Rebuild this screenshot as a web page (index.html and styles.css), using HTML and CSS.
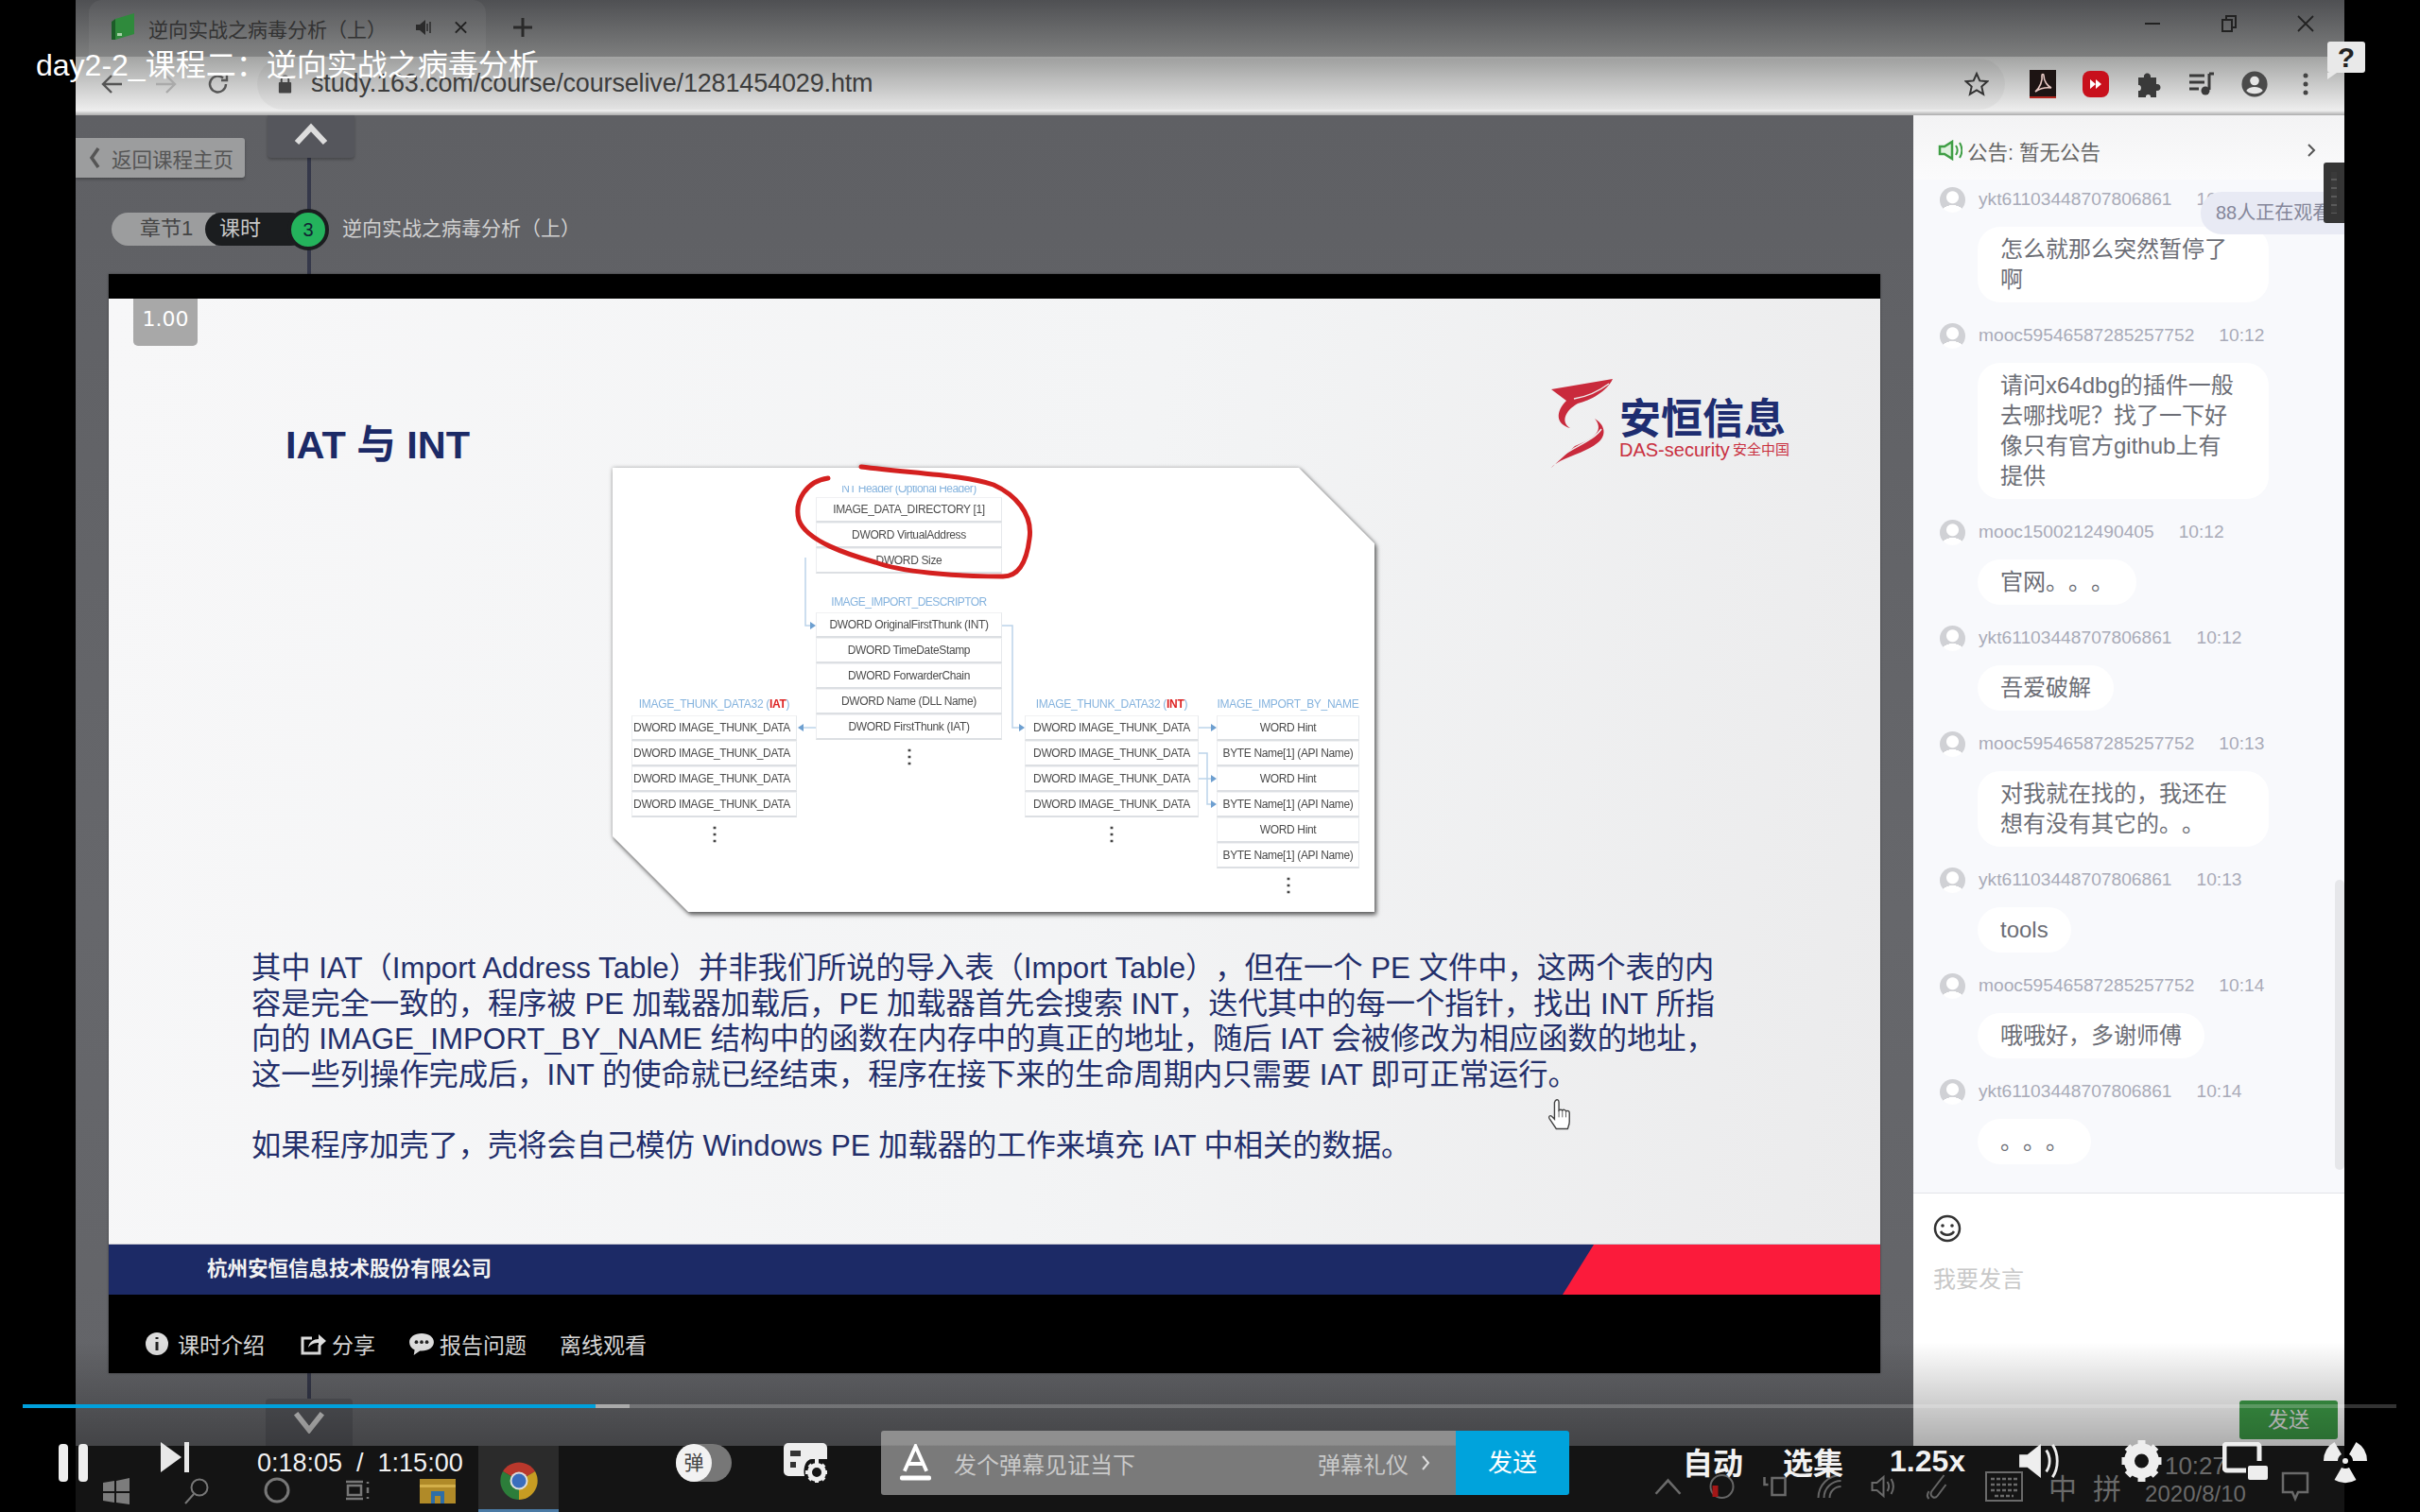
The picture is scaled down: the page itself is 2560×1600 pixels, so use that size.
FILE: index.html
```html
<!DOCTYPE html>
<html>
<head>
<meta charset="utf-8">
<title>逆向实战之病毒分析（上）</title>
<link rel="stylesheet" href="styles.css">
</head>
<body>

<div class="screen">

    <div class="tabstrip">
        <div class="tab">
            <svg class="tab-favicon" viewBox="0 0 24 28"><path d="M4 6L24 0V22L4 28Z" fill="#2f8a3c"/><path d="M0 9L4 6V28H0Z" fill="#1c5c28"/><path d="M6 21h5v3H6z" fill="#a9d2a9"/></svg>
            <span class="tab-title">逆向实战之病毒分析（上）</span>
            <svg class="tab-sound" viewBox="0 0 18 18"><path d="M1 6h4l6-5v16l-6-5H1z" fill="#2b2b2b"/><path d="M13 5v8M16 3v12" stroke="#2b2b2b" stroke-width="1.5"/></svg>
            <svg class="tab-close" viewBox="0 0 16 16"><path d="M2 2l12 12M14 2L2 14" stroke="#222" stroke-width="2.2"/></svg>
        </div>
        <svg class="tab-new" viewBox="0 0 22 22"><path d="M11 1v20M1 11h20" stroke="#2a2a2a" stroke-width="3"/></svg>
        <div class="win-buttons">
            <svg viewBox="0 0 20 20"><path d="M2 10h16" stroke="#222" stroke-width="2"/></svg>
            <svg viewBox="0 0 20 20"><path d="M3 6h10v12H3zM7 6V2h10v12h-4" fill="none" stroke="#222" stroke-width="2"/></svg>
            <svg viewBox="0 0 20 20"><path d="M2 2l16 16M18 2L2 18" stroke="#222" stroke-width="1.8"/></svg>
        </div>
    </div>

    <div class="toolbar">
        <svg class="nav-icon" viewBox="0 0 24 24"><path d="M22 12H3M11 3l-9 9 9 9" fill="none" stroke="#555" stroke-width="2.4"/></svg>
        <svg class="nav-icon" viewBox="0 0 24 24"><path d="M2 12h19M13 3l9 9-9 9" fill="none" stroke="#aaa" stroke-width="2.4"/></svg>
        <svg class="nav-icon" viewBox="0 0 24 24"><path d="M20 12a8.5 8.5 0 1 1-3-6.5M21 2v6h-6" fill="none" stroke="#555" stroke-width="2.4"/></svg>
        <div class="omnibox">
            <svg class="lock" viewBox="0 0 18 22"><path d="M5 9V6a4 4 0 0 1 8 0v3" fill="none" stroke="#444" stroke-width="2"/><rect x="2" y="9" width="14" height="12" rx="1" fill="#444"/></svg>
            <span class="url">study.163.com/course/courselive/1281454029.htm</span>
            <svg class="star" viewBox="0 0 26 26"><path d="M13 2l3.300 7.400 8 .8-6 5.400 1.800 8L13 19.400 5.900 23.600l1.800-8-6-5.400 8-.8z" fill="none" stroke="#333" stroke-width="2"/></svg>
        </div>
        <div class="ext-icons">
            <svg viewBox="0 0 28 30"><rect width="28" height="30" fill="#1d1413"/><rect y="28" width="28" height="2" fill="#b3261e"/><path d="M6 23c5-4 8-12 7-17 0-2 2-2 2 0 0 6 4 11 8 13-6-1-11 0-17 4z" fill="none" stroke="#e8c9c4" stroke-width="1.6"/></svg>
            <svg viewBox="0 0 28 28"><rect width="28" height="28" rx="8" fill="#c8101c"/><path d="M8 9l6 5-6 5zM14 9l6 5-6 5z" fill="#fff"/></svg>
            <svg viewBox="0 0 28 30"><path d="M3 8h6c-1-6 8-6 7 0h6v7c6-1 6 8 0 7v7h-6c1-4-6-4-5 0H3v-7c4 1 4-7 0-6z" fill="#3a3a3a"/></svg>
            <svg viewBox="0 0 28 28"><path d="M1 5h16M1 12h16M1 19h10" stroke="#3a3a3a" stroke-width="3"/><path d="M22 3v17" stroke="#3a3a3a" stroke-width="3"/><circle cx="18" cy="21" r="4.500" fill="#3a3a3a"/><path d="M22 3h5" stroke="#3a3a3a" stroke-width="3"/></svg>
            <svg viewBox="0 0 32 32"><circle cx="16" cy="16" r="15.500" fill="#4a4a4a"/><circle cx="16" cy="12" r="5.500" fill="#e6e6e6"/><path d="M6 24c3-6 17-6 20 0-5 5-15 5-20 0z" fill="#e6e6e6"/></svg>
            <svg class="ext-dots" viewBox="0 0 6 24"><circle cx="3" cy="3" r="2.500" fill="#444"/><circle cx="3" cy="12" r="2.500" fill="#444"/><circle cx="3" cy="21" r="2.500" fill="#444"/></svg>
        </div>
    </div>

    <div class="main">
        <div class="stage">
            <div class="spine"></div>

            <div class="stage-head">
                <div class="back-btn">
                    <svg viewBox="0 0 12 24"><path d="M10 2L3 12l7 10" fill="none" stroke="#555" stroke-width="3.500"/></svg>
                    <span>返回课程主页</span>
                </div>
                <div class="rail-tab rail-tab-up">
                    <svg viewBox="0 0 38 24"><path d="M4 21L19 5l15 16" fill="none" stroke="#ddd" stroke-width="6"/></svg>
                </div>
            </div>

            <div class="lesson-row">
                <span class="pill-chapter">章节1</span>
                <span class="pill-lesson">课时</span>
                <span class="lesson-num">3</span>
                <span class="lesson-name">逆向实战之病毒分析（上）</span>
            </div>

            <div class="player">
                <div class="player-top"></div>
                <div class="slide">
                    <div class="rate-badge">1.00</div>
                    <div class="slide-head">
                        <h1 class="slide-title">IAT 与 INT</h1>
                        <div class="logo">
                            <svg class="logo-mark" viewBox="0 0 66 96">
                                <path d="M1 12L66 1C60 14 42 24 29 27C15 35 11 47 21 53C6 49 5 36 17 24Z" fill="#c92a3c"/>
                                <path d="M25 22C38 20 50 15 62 6" fill="none" stroke="#eee" stroke-width="1.500"/>
                                <path d="M47 43C56 54 50 63 26 72L1 95C10 84 38 80 52 67C60 59 57 49 47 43Z" fill="#c92a3c"/>
                                <path d="M10 84C26 72 46 66 54 54" fill="none" stroke="#eee" stroke-width="1.500"/>
                            </svg>
                            <div class="logo-text">
                                <div class="logo-cn">安恒信息</div>
                                <div class="logo-en"><span>DAS-security</span><span class="logo-tag">安全中国</span></div>
                            </div>
                        </div>
                    </div>

                    <div class="diagram">
                        <div class="diagram-sheet"></div>

                        <div class="tbl tbl-nt">
                            <div class="tbl-title tbl-title-cut">NT Header (Optional Header)</div>
                            <div class="tbl-row">IMAGE_DATA_DIRECTORY [1]</div>
                            <div class="tbl-row">DWORD VirtualAddress</div>
                            <div class="tbl-row">DWORD Size</div>
                        </div>

                        <div class="tbl tbl-desc">
                            <div class="tbl-title">IMAGE_IMPORT_DESCRIPTOR</div>
                            <div class="tbl-row">DWORD OriginalFirstThunk (INT)</div>
                            <div class="tbl-row">DWORD TimeDateStamp</div>
                            <div class="tbl-row">DWORD ForwarderChain</div>
                            <div class="tbl-row">DWORD Name (DLL Name)</div>
                            <div class="tbl-row">DWORD FirstThunk (IAT)</div>
                            <div class="tbl-dots">⋮</div>
                        </div>

                        <div class="tbl tbl-iat">
                            <div class="tbl-title">IMAGE_THUNK_DATA32 (<b>IAT</b>)</div>
                            <div class="tbl-row">DWORD IMAGE_THUNK_DATA</div>
                            <div class="tbl-row">DWORD IMAGE_THUNK_DATA</div>
                            <div class="tbl-row">DWORD IMAGE_THUNK_DATA</div>
                            <div class="tbl-row">DWORD IMAGE_THUNK_DATA</div>
                            <div class="tbl-dots">⋮</div>
                        </div>

                        <div class="tbl tbl-int">
                            <div class="tbl-title">IMAGE_THUNK_DATA32 (<b>INT</b>)</div>
                            <div class="tbl-row">DWORD IMAGE_THUNK_DATA</div>
                            <div class="tbl-row">DWORD IMAGE_THUNK_DATA</div>
                            <div class="tbl-row">DWORD IMAGE_THUNK_DATA</div>
                            <div class="tbl-row">DWORD IMAGE_THUNK_DATA</div>
                            <div class="tbl-dots">⋮</div>
                        </div>

                        <div class="tbl tbl-name">
                            <div class="tbl-title">IMAGE_IMPORT_BY_NAME</div>
                            <div class="tbl-row">WORD Hint</div>
                            <div class="tbl-row">BYTE Name[1] (API Name)</div>
                            <div class="tbl-row">WORD Hint</div>
                            <div class="tbl-row">BYTE Name[1] (API Name)</div>
                            <div class="tbl-row">WORD Hint</div>
                            <div class="tbl-row">BYTE Name[1] (API Name)</div>
                            <div class="tbl-dots">⋮</div>
                        </div>

                        <svg class="diagram-lines" viewBox="0 0 808 470">
                            <g fill="none" stroke="#bcd4ea" stroke-width="1.500">
                                <path d="M204 95V167H212"/>
                                <path d="M412 167H423V275H434"/>
                                <path d="M215 275H200"/>
                                <path d="M620 275H634"/>
                                <path d="M620 302H629V356H634"/>
                                <path d="M620 329H634"/>
                            </g>
                            <g fill="#6d9fd0">
                                <path d="M209 163l6 4-6 4z"/>
                                <path d="M430 271l6 4-6 4z"/>
                                <path d="M202 271l-6 4 6 4z"/>
                                <path d="M633 271l6 4-6 4z"/>
                                <path d="M633 325l6 4-6 4z"/>
                                <path d="M633 352l6 4-6 4z"/>
                            </g>
                            <path class="red-mark" d="M228 11C205 14 192 35 197 55C205 78 250 92 278 100C305 110 360 115 413 115C430 115 438 100 441 75C445 48 425 28 403 18C375 8 320 6 263 -1"/>
                        </svg>
                    </div>

                    <div class="slide-text">
                        <p>其中 IAT（Import Address Table）并非我们所说的导入表（Import Table），但在一个 PE 文件中，这两个表的内<br>容是完全一致的，程序被 PE 加载器加载后，PE 加载器首先会搜索 INT，迭代其中的每一个指针，找出 INT 所指<br>向的 IMAGE_IMPORT_BY_NAME 结构中的函数在内存中的真正的地址，随后 IAT 会被修改为相应函数的地址，<br>这一些列操作完成后，INT 的使命就已经结束，程序在接下来的生命周期内只需要 IAT 即可正常运行。</p>
                        <p>如果程序加壳了，壳将会自己模仿 Windows PE 加载器的工作来填充 IAT 中相关的数据。</p>
                    </div>

                    <svg class="hand" viewBox="0 0 28 38"><path d="M9 2c2-2 4-1 4 2v9c1-1 3-1 4 0 1-1 3-1 4 1 2-1 4 0 4 2v10c0 3-1 5-2 8H10L2 22c-1-2 1-4 3-2l3 3V4z" fill="#fff" stroke="#444" stroke-width="1.500"/><path d="M13 13v8M17 13v8M21 14v7" stroke="#555"/></svg>
                </div>

                <div class="slide-band">
                    <span>杭州安恒信息技术股份有限公司</span>
                    <div class="band-red"></div>
                </div>

                <div class="player-foot">
                    <div class="foot-item">
                        <svg viewBox="0 0 24 24"><circle cx="12" cy="12" r="12" fill="#ddd"/><path d="M12 5v2M12 10v9" stroke="#222" stroke-width="3"/></svg>
                        <span>课时介绍</span>
                    </div>
                    <div class="foot-item">
                        <svg viewBox="0 0 28 24"><path d="M20 13v9H2V6h10" fill="none" stroke="#ddd" stroke-width="3"/><path d="M8 16c1-6 6-9 11-9V2l8 7-8 7v-5c-4 0-8 1-11 5z" fill="#ddd"/></svg>
                        <span class="foot-short">分享</span>
                    </div>
                    <div class="foot-item">
                        <svg viewBox="0 0 30 26"><path d="M15 1c8 0 14 4 14 10s-6 10-14 10h-2l-7 5 1-6C3 18 1 15 1 11 1 5 7 1 15 1z" fill="#ddd"/><circle cx="9" cy="11" r="2" fill="#222"/><circle cx="15" cy="11" r="2" fill="#222"/><circle cx="21" cy="11" r="2" fill="#222"/></svg>
                        <span class="foot-short">报告问题</span>
                    </div>
                    <div class="foot-item foot-last"><span>离线观看</span></div>
                </div>
            </div>

            <div class="rail-tab rail-tab-down">
                <svg viewBox="0 0 38 26"><path d="M4 3l15 19L34 3" fill="none" stroke="#ccc" stroke-width="6"/></svg>
            </div>
        </div>

        <div class="chat">
            <div class="notice">
                <svg class="notice-icon" viewBox="0 0 26 22"><path d="M2 7h5l8-5v18l-8-5H2z" fill="#dff0df" stroke="#3f9e45" stroke-width="2.500"/><path d="M19 6c2 3 2 7 0 10M23 3c3 5 3 11 0 16" fill="none" stroke="#3f9e45" stroke-width="2"/></svg>
                <span>公告: 暂无公告</span>
                <svg class="notice-more" viewBox="0 0 10 16"><path d="M2 2l6 6-6 6" fill="none" stroke="#555" stroke-width="2"/></svg>
            </div>

            <div class="messages">
                <div class="msg">
                    <div class="msg-head"><span class="avatar"></span><span class="msg-name">ykt61103448707806861</span><span class="msg-time">10:12</span></div>
                    <div class="bubble bubble-full">怎么就那么突然暂停了啊</div>
                </div>
                <div class="msg">
                    <div class="msg-head"><span class="avatar"></span><span class="msg-name">mooc59546587285257752</span><span class="msg-time">10:12</span></div>
                    <div class="bubble bubble-full">请问x64dbg的插件一般去哪找呢？找了一下好像只有官方github上有提供</div>
                </div>
                <div class="msg">
                    <div class="msg-head"><span class="avatar"></span><span class="msg-name">mooc1500212490405</span><span class="msg-time">10:12</span></div>
                    <div class="bubble">官网。。。</div>
                </div>
                <div class="msg">
                    <div class="msg-head"><span class="avatar"></span><span class="msg-name">ykt61103448707806861</span><span class="msg-time">10:12</span></div>
                    <div class="bubble">吾爱破解</div>
                </div>
                <div class="msg">
                    <div class="msg-head"><span class="avatar"></span><span class="msg-name">mooc59546587285257752</span><span class="msg-time">10:13</span></div>
                    <div class="bubble bubble-full">对我就在找的，我还在想有没有其它的。。</div>
                </div>
                <div class="msg">
                    <div class="msg-head"><span class="avatar"></span><span class="msg-name">ykt61103448707806861</span><span class="msg-time">10:13</span></div>
                    <div class="bubble">tools</div>
                </div>
                <div class="msg">
                    <div class="msg-head"><span class="avatar"></span><span class="msg-name">mooc59546587285257752</span><span class="msg-time">10:14</span></div>
                    <div class="bubble">哦哦好，多谢师傅</div>
                </div>
                <div class="msg">
                    <div class="msg-head"><span class="avatar"></span><span class="msg-name">ykt61103448707806861</span><span class="msg-time">10:14</span></div>
                    <div class="bubble">。。。</div>
                </div>
                <div class="chat-scroll"></div>
                <div class="viewers">88人正在观看</div>
            </div>
            <div class="side-grip"></div>

            <div class="composer">
                <svg class="smile" viewBox="0 0 30 30"><circle cx="15" cy="15" r="13" fill="none" stroke="#333" stroke-width="2.500"/><circle cx="10" cy="12" r="1.800" fill="#333"/><circle cx="20" cy="12" r="1.800" fill="#333"/><path d="M8 18c3 5 11 5 14 0" fill="none" stroke="#333" stroke-width="2.500"/></svg>
                <div class="composer-hint">我要发言</div>
                <div class="composer-send">发送</div>
            </div>
        </div>
    </div>

    <div class="taskbar">
        <div class="task-cell">
            <svg viewBox="0 0 30 28" class="win-logo"><path d="M1 5l12-2v11H1zM15 3l14-3v14H15zM1 16h12v10L1 24zM15 16h14v12l-14-2z" fill="#7c7c7c"/></svg>
        </div>
        <div class="task-cell">
            <svg viewBox="0 0 30 30" class="task-icon"><circle cx="18" cy="12" r="8.500" fill="none" stroke="#777" stroke-width="2"/><path d="M12 19L3 29" stroke="#777" stroke-width="2"/></svg>
        </div>
        <div class="task-cell">
            <svg viewBox="0 0 30 30" class="task-icon"><circle cx="15" cy="15" r="12" fill="none" stroke="#777" stroke-width="3"/></svg>
        </div>
        <div class="task-cell">
            <svg viewBox="0 0 30 30" class="task-icon"><path d="M3 6h18M3 24h18M5 10h14v10H5zM26 6v2M26 12v6M26 22v2" fill="none" stroke="#777" stroke-width="2.500"/></svg>
        </div>
        <div class="task-cell">
            <svg viewBox="0 0 38 26" class="task-folder"><path d="M0 0h38v26H0z" fill="#b08a28"/><path d="M0 6h38v3H0z" fill="#d4b04a"/><path d="M12 13h14v13h-4v-8h-6v8h-4z" fill="#2e6ea8"/></svg>
        </div>
        <div class="task-cell task-active">
            <svg viewBox="0 0 40 40" class="task-chrome">
                <path d="M20 20L3 10A20 20 0 0 1 37 10Z" fill="#b9382c"/>
                <path d="M20 20L37 10A20 20 0 0 1 20 40Z" fill="#c79c22"/>
                <path d="M20 20L20 40A20 20 0 0 1 3 10Z" fill="#2c7d3a"/>
                <circle cx="20" cy="20" r="9.500" fill="#ddd"/>
                <circle cx="20" cy="20" r="7.500" fill="#3a6dbd"/>
            </svg>
        </div>
        <div class="tray">
            <svg viewBox="0 0 24 14" class="tray-icon"><path d="M2 13L12 2l10 11" fill="none" stroke="#6a6a6a" stroke-width="2"/></svg>
            <svg viewBox="0 0 30 30" class="tray-icon"><circle cx="15" cy="15" r="12" fill="none" stroke="#666" stroke-width="2"/><path d="M5 14h6v12H5z" fill="#a51717"/></svg>
            <svg viewBox="0 0 30 30" class="tray-icon"><path d="M3 5v8h4M11 6h14v18H11z" fill="none" stroke="#6a6a6a" stroke-width="2.500"/></svg>
            <svg viewBox="0 0 30 30" class="tray-icon"><path d="M3 27A24 24 0 0 1 27 3M9 27A18 18 0 0 1 27 9M15 27a12 12 0 0 1 12-12" fill="none" stroke="#666" stroke-width="2"/></svg>
            <svg viewBox="0 0 30 30" class="tray-icon"><path d="M3 11h5l7-6v20l-7-6H3zM19 10c2 3 2 7 0 10M23 7c3 5 3 11 0 16" fill="none" stroke="#6a6a6a" stroke-width="2"/></svg>
            <svg viewBox="0 0 30 30" class="tray-icon"><path d="M22 3L9 20c-3 5 3 9 6 5l9-12M6 20c-2 3-2 6 0 8" fill="none" stroke="#666" stroke-width="2"/></svg>
            <svg viewBox="0 0 40 34" class="tray-key"><rect x="1" y="2" width="38" height="30" fill="none" stroke="#6a6a6a" stroke-width="2"/><path d="M6 9h28M6 15h28M6 21h28M10 27h20" stroke="#6a6a6a" stroke-width="2.500" stroke-dasharray="4 2"/></svg>
            <span class="tray-ime">中</span>
            <span class="tray-ime">拼</span>
            <div class="clock"><span class="clock-time">10:27</span><span>2020/8/10</span></div>
            <svg viewBox="0 0 30 32" class="tray-note"><path d="M2 2h26v20H18l-3 7-3-7H2z" fill="none" stroke="#6a6a6a" stroke-width="2.500"/></svg>
        </div>
    </div>
</div>

<!-- player chrome sitting on top of the recording -->
<div class="overlay">
    <div class="overlay-fade"></div>
    <div class="video-title">day2-2_课程二：逆向实战之病毒分析</div>
    <div class="help-badge">?</div>
    <div class="progress">
        <div class="progress-played"></div>
        <div class="progress-buffer"></div>
    </div>
    <div class="controls">
        <div class="pause"><i></i><i></i></div>
        <svg class="next" viewBox="0 0 30 32"><path d="M0 0l22 16L0 32z" fill="#e8e8e8"/><rect x="25" y="0" width="5" height="32" fill="#e8e8e8"/></svg>
        <div class="timecode">0:18:05&nbsp; /&nbsp; 1:15:00</div>
        <div class="danmu-toggle"><span>弹</span></div>
        <svg class="danmu-set" viewBox="0 0 46 42"><path d="M5 0h36a5 5 0 0 1 5 5v12H30c-6 0-10 8-8 18H5a5 5 0 0 1-5-5V5a5 5 0 0 1 5-5z" fill="#eee"/><rect x="7" y="8" width="11" height="6" fill="#333"/><rect x="7" y="20" width="6" height="6" fill="#333"/><circle cx="35" cy="31" r="7.500" fill="none" stroke="#eee" stroke-width="5"/><path d="M35 17v6M35 39v4M23 31h5M42 31h4M27 23l3 3M40 36l3 3M43 23l-3 3M30 36l-3 3" stroke="#eee" stroke-width="4"/></svg>
        <div class="danmu-input">
            <svg class="danmu-a" viewBox="0 0 34 40"><path d="M5 29L17 2l12 27M9 21h16" fill="none" stroke="#fff" stroke-width="4"/><rect x="0" y="34" width="34" height="5" rx="2" fill="#fff"/></svg>
            <span class="danmu-hint">发个弹幕见证当下</span>
            <span class="danmu-rule">弹幕礼仪</span>
            <svg class="danmu-more" viewBox="0 0 10 18"><path d="M2 2l6 7-6 7" fill="none" stroke="#ddd" stroke-width="2"/></svg>
        </div>
        <div class="danmu-send">发送</div>
        <div class="ctl-right">
            <span class="ctl-text">自动</span>
            <span class="ctl-text ctl-tight">选集</span>
            <span class="ctl-text">1.25x</span>
            <svg class="ctl-icon ctl-sound" viewBox="0 0 44 40"><path d="M0 13h9L24 1v38L9 27H0z" fill="#eee"/><path d="M30 8c5 7 5 17 0 24M37 2c7 10 7 26 0 36" fill="none" stroke="#eee" stroke-width="3"/></svg>
            <svg class="ctl-icon ctl-gear" viewBox="0 0 46 44"><circle cx="23" cy="22" r="13" fill="none" stroke="#eee" stroke-width="11"/><path d="M23 0v9M23 35v9M2 22h9M35 22h9M8 7l7 7M31 30l7 7M38 7l-7 7M15 30l-7 7" stroke="#eee" stroke-width="8"/></svg>
            <svg class="ctl-icon ctl-wide" viewBox="0 0 48 40"><path d="M25 30H5a3 3 0 0 1-3-3V5a3 3 0 0 1 3-3h31a3 3 0 0 1 3 3v15" fill="none" stroke="#eee" stroke-width="5"/><rect x="27" y="25" width="21" height="15" rx="2" fill="#eee"/></svg>
            <svg class="ctl-icon ctl-nuke" viewBox="0 0 48 48"><path d="M32 24L47 24A23 23 0 0 0 35.500 4.100L28 17.100A8 8 0 0 1 32 24Z" fill="#eee"/><path d="M16 24L1 24A23 23 0 0 1 12.500 4.100L20 17.100A8 8 0 0 0 16 24Z" fill="#eee"/><path d="M20 30.900L12.500 43.900A23 23 0 0 0 35.500 43.900L28 30.900A8 8 0 0 1 20 30.900Z" fill="#eee"/><circle cx="24" cy="24" r="3" fill="#eee"/></svg>
        </div>
    </div>
</div>

</body>
</html>
```

FILE: styles.css
```css
* {
    box-sizing: border-box;
}
html, body {
    margin: 0;
    width: 2560px;
    height: 1600px;
    overflow: hidden;
}
body {
    position: relative;
    background: #000;
    padding: 0 80px;
    font-family: "Liberation Sans", "Noto Sans CJK SC", sans-serif;
    text-spacing-trim: space-all;
}
.screen {
    width: 2400px;
    height: 1600px;
    display: flex;
    flex-direction: column;
}

/* browser top */
.tabstrip {
    height: 60px;
    display: flex;
    align-items: stretch;
    padding-left: 14px;
    background: linear-gradient(#4f5053, #7d7e7e);
}
.tab {
    width: 420px;
    display: flex;
    align-items: center;
    padding: 0 19px 0 24px;
    background: rgba(255, 255, 255, .05);
    border-radius: 14px 14px 0 0;
}
.tab-favicon {
    width: 24px;
    height: 28px;
    margin-top: -4px;
    flex: none;
}
.tab-title {
    margin-left: 15px;
    width: 282px;
    font-size: 21px;
    color: #333;
    white-space: nowrap;
    overflow: hidden;
}
.tab-sound {
    width: 18px;
    height: 18px;
    margin-top: -2px;
    flex: none;
}
.tab-close {
    width: 15px;
    height: 16px;
    margin-left: 23px;
    margin-top: -2px;
    flex: none;
}
.tab-new {
    width: 22px;
    height: 22px;
    margin: 18px 0 0 28px;
}
.win-buttons {
    margin-left: auto;
    display: flex;
    gap: 61px;
    padding: 15px 31px 0 0;
}
.win-buttons svg {
    width: 20px;
    height: 20px;
}
.toolbar {
    height: 62px;
    display: flex;
    align-items: center;
    padding: 0 0 5px 27px;
    gap: 32px;
    background: linear-gradient(#a3a4a3, #eeeeee 92%, #aaa);
}
.nav-icon {
    width: 24px;
    height: 24px;
}
.omnibox {
    width: 1849px;
    height: 54px;
    margin-left: -3px;
    display: flex;
    align-items: center;
    padding-left: 21px;
    border-radius: 27px;
    background: rgba(0, 0, 0, .035);
}
.lock {
    width: 17px;
    height: 22px;
}
.url {
    margin-left: 19px;
    font-size: 27px;
    color: #3c3c3c;
    letter-spacing: -.15px;
}
.star {
    width: 26px;
    height: 28px;
    margin-left: auto;
    margin-right: 17px;
}
.ext-icons {
    display: flex;
    align-items: center;
    gap: 28px;
    margin-left: -6px;
}
.ext-icons svg {
    width: 28px;
    height: 30px;
}
.ext-icons .ext-dots {
    width: 6px;
    height: 24px;
    margin-left: 9px;
}

/* main area */
.main {
    flex: 1;
    display: flex;
    min-height: 0;
}
.stage {
    position: relative;
    width: 1944px;
    display: flex;
    flex-direction: column;
    background: linear-gradient(#5f6064, #66676b 60%, #636468);
}
.spine {
    position: absolute;
    left: 245px;
    top: 0;
    bottom: 0;
    width: 4px;
    background: #35384a;
}
.stage-head {
    height: 103px;
    display: flex;
    align-items: flex-start;
}
.back-btn {
    width: 179px;
    height: 42px;
    margin-top: 24px;
    display: flex;
    align-items: center;
    padding-left: 14px;
    gap: 12px;
    background: #9c9d9e;
    border-radius: 0 3px 3px 0;
    box-shadow: 0 2px 3px rgba(0, 0, 0, .25);
    font-size: 21.500px;
    color: #555;
}
.back-btn svg {
    width: 12px;
    height: 24px;
}
.rail-tab {
    position: relative;
    width: 92px;
    display: flex;
    align-items: center;
    justify-content: center;
    background: #55565c;
}
.rail-tab svg {
    width: 38px;
    height: 24px;
}
.rail-tab-up {
    height: 45px;
    margin-left: 24px;
    border-radius: 0 0 4px 4px;
    box-shadow: 0 2px 3px rgba(0, 0, 0, .25);
}
.rail-tab-up svg {
    margin-top: -6px;
}
.rail-tab-down {
    height: 50px;
    margin: 27px 0 0 201px;
    border-radius: 4px 4px 0 0;
    background: #55565b;
}
.lesson-row {
    position: relative;
    height: 35px;
    display: flex;
    align-items: center;
    margin-left: 38px;
    font-size: 22px;
}
.pill-chapter {
    width: 110px;
    height: 35px;
    line-height: 33px;
    padding-left: 30px;
    border-radius: 18px 0 0 18px;
    background: #9c9d9e;
    color: #444;
}
.pill-lesson {
    width: 108px;
    height: 35px;
    line-height: 33px;
    margin-left: -11px;
    padding-left: 15px;
    border-radius: 18px;
    background: #1b1d1f;
    color: #c9c9c9;
}
.lesson-num {
    width: 44px;
    height: 44px;
    margin-left: -21px;
    border: 4px solid #1b1d1f;
    border-radius: 50%;
    background: #24b35c;
    color: #123;
    font-size: 20px;
    line-height: 36px;
    text-align: center;
}
.lesson-name {
    margin: -5px 0 0 14px;
    font-size: 21px;
    color: #d0d0d0;
}
.player {
    position: relative;
    margin: 30px 0 0 35px;
    width: 1874px;
    height: 1163px;
    background: #000;
    box-shadow: 0 0 2px rgba(0, 0, 0, .5);
}
.player-top {
    height: 26px;
}
.slide {
    position: relative;
    height: 1000px;
    background: linear-gradient(100deg, #f7f7f8, #f3f4f5 55%, #ebebec);
}
.rate-badge {
    position: absolute;
    left: 26px;
    top: 0;
    width: 68px;
    height: 50px;
    padding-top: 9px;
    background: #a8a8a8;
    border-radius: 0 0 5px 5px;
    color: #fff;
    font-family: "DejaVu Sans", sans-serif;
    font-size: 22px;
    text-align: center;
}
.slide-head {
    height: 180px;
    display: flex;
    align-items: flex-end;
    justify-content: space-between;
    padding: 0 96px 0 187px;
}
.slide-title {
    margin: 0;
    font-size: 41.500px;
    line-height: 50px;
    font-weight: bold;
    color: #1c2a66;
}
.logo {
    display: flex;
    gap: 7px;
}
.logo-mark {
    width: 66px;
    height: 96px;
}
.logo-text {
    padding-top: 19px;
    width: 180px;
}
.logo-cn {
    font-size: 44px;
    line-height: 50px;
    font-weight: bold;
    color: #1e2d70;
}
.logo-en {
    display: flex;
    align-items: center;
    justify-content: space-between;
    margin-top: -4px;
    font-size: 20px;
    line-height: 22px;
    color: #c9303f;
}
.logo-tag {
    font-size: 15px;
}

/* diagram inside the slide, a free canvas */
.diagram {
    position: relative;
    width: 806px;
    height: 470px;
    margin: -1px 0 0 533px;
    filter: drop-shadow(2px 3px 2px rgba(0, 0, 0, .5)) drop-shadow(0 0 2px rgba(0, 0, 0, .3));
}
.diagram-sheet {
    position: absolute;
    inset: 0;
    background: #fff;
    clip-path: polygon(0 0, 726px 0, 806px 80px, 806px 470px, 80px 470px, 0 390px);
}
.diagram-lines {
    position: absolute;
    inset: 0;
    width: 808px;
    height: 470px;
    overflow: visible;
}
.red-mark {
    fill: none;
    stroke: #d4201f;
    stroke-width: 5;
    stroke-linecap: round;
}
.tbl {
    position: absolute;
    font-size: 12px;
    letter-spacing: -.35px;
    text-align: center;
    color: #4b4b4b;
}
.tbl-nt {
    left: 215px;
    top: 19px;
    width: 197px;
}
.tbl-desc {
    left: 215px;
    top: 133px;
    width: 197px;
}
.tbl-iat {
    left: 20px;
    top: 242px;
    width: 175px;
}
.tbl-iat .tbl-row {
    padding-right: 5px;
}
.tbl-int {
    left: 436px;
    top: 242px;
    width: 184px;
}
.tbl-name {
    left: 639px;
    top: 242px;
    width: 151px;
}
.tbl-title {
    height: 20px;
    line-height: 18px;
    font-size: 12px;
    letter-spacing: -.55px;
    color: #85b3de;
    white-space: nowrap;
}
.tbl-iat .tbl-title, .tbl-int .tbl-title, .tbl-name .tbl-title {
    line-height: 16px;
    letter-spacing: -.3px;
}
.tbl-title b {
    color: #d22;
}
.tbl-nt .tbl-title-cut {
    height: 12px;
    line-height: 6px;
    overflow: hidden;
}
.tbl-row {
    height: 27px;
    line-height: 25px;
    background: #fff;
    border-top: 1px solid #f0f1f3;
    border-left: 1px solid #eceef0;
    border-right: 1px solid #e6e9ec;
    border-bottom: 2px solid #dcdfe3;
    white-space: nowrap;
}
.tbl-dots {
    margin-top: 5px;
    font-size: 20px;
    font-weight: bold;
    line-height: 24px;
    color: #444;
}
.slide-text {
    margin: 41px 0 0 151px;
    font-size: 31.250px;
    line-height: 37.600px;
    color: #232f6b;
    white-space: nowrap;
}
.slide-text p {
    margin: 0 0 38px;
}
.hand {
    position: absolute;
    left: 1522px;
    top: 846px;
    width: 26px;
    height: 37px;
}
.slide-band {
    position: relative;
    height: 54px;
    padding-left: 104px;
    background: #1c2a66;
    color: #f2f2f2;
    font-size: 21.500px;
    font-weight: bold;
    line-height: 52px;
    border-top: 1px solid #c9c9d2;
}
.band-red {
    position: absolute;
    right: 0;
    top: 0;
    bottom: 0;
    width: 336px;
    background: #fb1b3b;
    clip-path: polygon(33px 0, 100% 0, 100% 100%, 0 100%);
}
.player-foot {
    height: 83px;
    display: flex;
    align-items: center;
    padding: 20px 0 0 39px;
    color: #d8d8d8;
    font-size: 23px;
}
.foot-item {
    display: flex;
    align-items: center;
    gap: 10px;
    margin-right: 38px;
}
.foot-item svg {
    width: 24px;
    height: 24px;
}
.foot-item + .foot-item svg {
    width: 28px;
}
.foot-short {
    margin-left: -5px;
}
.foot-item + .foot-item + .foot-item {
    margin-left: -3px;
}
.foot-item.foot-last {
    margin-left: -3px;
}

/* chat column */
.chat {
    position: relative;
    width: 456px;
    display: flex;
    flex-direction: column;
    background: #fff;
}
.notice {
    height: 68px;
    display: flex;
    align-items: center;
    padding: 6px 0 0 26px;
    background: linear-gradient(#f3f3f4, #fbfbfc);
    font-size: 21.500px;
    color: #666;
}
.notice-icon {
    width: 26px;
    height: 22px;
    margin-right: 5px;
}
.notice-more {
    width: 10px;
    height: 16px;
    margin-left: auto;
    margin-right: 30px;
}
.messages {
    position: relative;
    height: 1073px;
    padding-top: 7px;
    background: #f8f9fc;
    border-bottom: 1px solid #e3e4e8;
    overflow: hidden;
}
.msg {
    margin-bottom: 21px;
}
.msg-head {
    height: 28px;
    display: flex;
    align-items: center;
    padding-left: 28px;
    margin-bottom: 15px;
    font-size: 19.200px;
    color: #a9abb8;
}
.avatar {
    width: 27px;
    height: 27px;
    margin-right: 14px;
    border-radius: 50%;
    background: radial-gradient(circle at 50% 40%, #fff 0 6px, transparent 7px), radial-gradient(ellipse 12px 8px at 50% 100%, #fff 0 98%, transparent), #d0d1d5;
}
.msg-time {
    margin-left: 26px;
}
.bubble {
    width: fit-content;
    margin-left: 68px;
    padding: 8px 24px;
    background: #fff;
    border-radius: 24px;
    font-size: 24px;
    line-height: 32px;
    color: #6c6e76;
}
.bubble-full {
    width: 308px;
    padding-right: 30px;
}
.chat-scroll {
    position: absolute;
    right: 0;
    top: 741px;
    width: 10px;
    height: 307px;
    border-radius: 5px;
    background: #e6e7ea;
}
.viewers {
    position: absolute;
    right: 0;
    top: 13px;
    width: 152px;
    height: 45px;
    padding-left: 16px;
    background: #e8eaf4;
    border-radius: 22px 0 0 22px;
    font-size: 20px;
    line-height: 45px;
    color: #85879a;
    white-space: nowrap;
    overflow: hidden;
}
.side-grip {
    position: absolute;
    right: 0;
    top: 50px;
    width: 22px;
    height: 64px;
    border-radius: 3px 0 0 3px;
    background: repeating-linear-gradient(#3a3a3a 0 7px, #5a5a5a 7px 9px) center / 6px 44px no-repeat, #353535;
}
.composer {
    position: relative;
    flex: 1;
    padding: 22px 0 0 21px;
    background: #fff;
}
.smile {
    display: block;
    width: 30px;
    height: 30px;
}
.composer-hint {
    margin-top: 19px;
    font-size: 24px;
    color: #c8c8c8;
}
.composer-send {
    position: absolute;
    right: 7px;
    bottom: 7px;
    width: 104px;
    height: 41px;
    background: #3e9e48;
    border-radius: 3px;
    color: #e8e8e8;
    font-size: 22px;
    line-height: 41px;
    text-align: center;
}

/* windows taskbar */
.taskbar {
    height: 70px;
    display: flex;
    background: #141414;
}
.task-cell {
    width: 85px;
    display: flex;
    align-items: center;
    justify-content: center;
}
.task-active {
    margin-left: 1px;
    background: #2b2b2b;
    border-bottom: 3px solid #4a7aa5;
}
.win-logo {
    width: 30px;
    height: 28px;
    margin-top: 26px;
}
.task-icon {
    width: 30px;
    height: 30px;
    margin-top: 24px;
}
.task-folder {
    width: 38px;
    height: 26px;
    margin-top: 26px;
}
.task-chrome {
    width: 40px;
    height: 40px;
    margin-top: 6px;
}
.tray {
    margin-left: auto;
    display: flex;
    align-items: center;
    padding-top: 16px;
    padding-right: 37px;
    color: #6a6a6a;
}
.tray-icon {
    width: 57px;
    height: 30px;
    padding: 0 13px;
}
.tray-key {
    width: 40px;
    height: 34px;
    margin: 0 16px 0 22px;
}
.tray-ime {
    width: 52px;
    font-size: 30px;
    text-align: center;
}
.tray-ime + .tray-ime {
    margin-left: -5px;
}
.clock {
    width: 125px;
    margin-left: 5px;
    display: flex;
    flex-direction: column;
    align-items: center;
    font-size: 24px;
    line-height: 30px;
    margin-top: -14px;
}
.clock-time {
    font-size: 26px;
}
.tray-note {
    width: 30px;
    height: 32px;
    margin-left: 28px;
}

/* player overlay */
.overlay {
    position: absolute;
    inset: 0;
    pointer-events: none;
}
.overlay-fade {
    position: absolute;
    left: 80px;
    right: 80px;
    top: 1420px;
    height: 110px;
    background: linear-gradient(rgba(0, 0, 0, 0), rgba(0, 0, 0, .32));
}
.video-title {
    position: absolute;
    left: 38px;
    top: 50px;
    font-size: 32px;
    line-height: 38px;
    color: #fff;
    white-space: nowrap;
}
.help-badge {
    position: absolute;
    left: 2462px;
    top: 44px;
    width: 40px;
    height: 33px;
    background: #e9e9e9;
    border-radius: 3px;
    color: #222;
    font-size: 30px;
    font-weight: bold;
    line-height: 33px;
    text-align: center;
}
.help-badge::after {
    content: "";
    position: absolute;
    left: 0;
    top: 33px;
    border-top: 7px solid #e9e9e9;
    border-right: 10px solid transparent;
}
.progress {
    position: absolute;
    left: 24px;
    right: 25px;
    top: 1486px;
    height: 4px;
    display: flex;
    background: rgba(255, 255, 255, .2);
}
.progress-played {
    width: 606px;
    background: #00a0dc;
}
.progress-buffer {
    width: 36px;
    background: #aaa;
}
.controls {
    position: absolute;
    left: 0;
    right: 0;
    top: 1514px;
    height: 68px;
    display: flex;
    align-items: center;
    padding-left: 62px;
}
.pause {
    width: 31px;
    height: 40px;
    display: flex;
    justify-content: space-between;
}
.pause i {
    width: 10px;
    border-radius: 4px;
    background: #eee;
}
.next {
    width: 30px;
    height: 32px;
    margin: -12px 0 0 77px;
}
.timecode {
    width: 218px;
    margin-left: 72px;
    font-size: 27px;
    color: #f2f2f2;
    white-space: nowrap;
}
.danmu-toggle {
    width: 59px;
    height: 40px;
    margin-left: 225px;
    border-radius: 20px;
    background: #777;
}
.danmu-toggle span {
    display: block;
    width: 38px;
    height: 40px;
    border-radius: 50%;
    background: #f2f2f2;
    color: #444;
    font-size: 21px;
    line-height: 40px;
    text-align: center;
}
.danmu-set {
    width: 46px;
    height: 42px;
    margin-left: 55px;
}
.danmu-input {
    width: 608px;
    height: 68px;
    margin-left: 57px;
    display: flex;
    align-items: center;
    padding: 0 27px 0 20px;
    background: linear-gradient(#8f8f8f, #8f8f8f 22%, #7a7a7a 24%);
    border-radius: 3px 0 0 3px;
    font-size: 24px;
    color: #c9c9c9;
}
.danmu-a {
    width: 33px;
    height: 40px;
}
.danmu-hint {
    margin-left: 24px;
}
.danmu-rule {
    margin-left: auto;
}
.danmu-more {
    width: 10px;
    height: 18px;
    margin-left: 13px;
}
.danmu-send {
    width: 120px;
    height: 68px;
    background: #00a3dc;
    border-radius: 0 3px 3px 0;
    color: #fff;
    font-size: 26px;
    line-height: 68px;
    text-align: center;
}
.ctl-right {
    margin-left: 120px;
    display: flex;
    align-items: center;
    gap: 46px;
    height: 44px;
    margin-top: -4px;
    color: #f2f2f2;
}
.ctl-text {
    font-size: 32px;
    font-weight: bold;
    white-space: nowrap;
}
.ctl-tight {
    margin-left: -4px;
}
.ctl-tight + .ctl-text {
    margin-left: 3px;
}
.ctl-icon {
    flex: none;
}
.ctl-sound {
    width: 44px;
    height: 38px;
    margin-left: 10px;
}
.ctl-gear {
    width: 47px;
    height: 44px;
    margin-left: 17px;
}
.ctl-wide {
    width: 48px;
    height: 40px;
    margin-left: 16px;
}
.ctl-nuke {
    width: 48px;
    height: 48px;
    margin-left: 12px;
}
```
